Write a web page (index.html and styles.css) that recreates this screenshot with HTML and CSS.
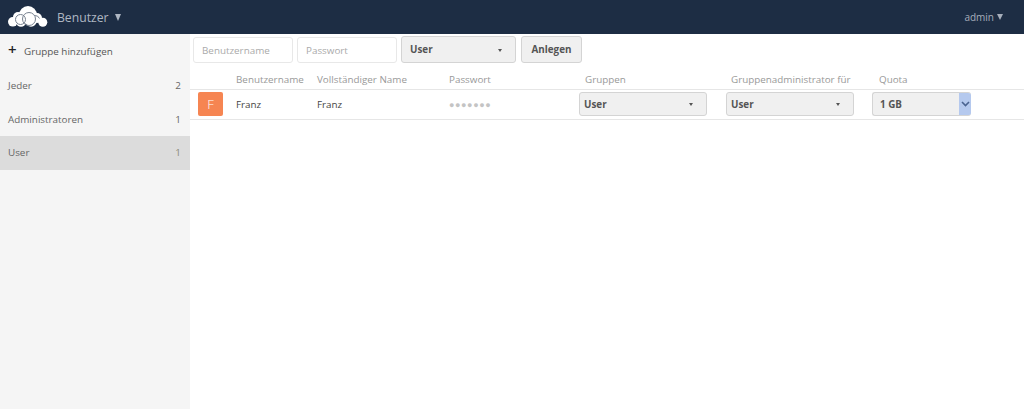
FILE: index.html
```html
<!DOCTYPE html>
<html lang="de">
<head>
<meta charset="utf-8">
<title>Benutzer</title>
<link rel="stylesheet" href="styles.css">
</head>
<body>
<header class="topbar">
  <svg class="logo" width="40" height="21" viewBox="0 0 40 21">
    <g fill="#fff">
      <circle cx="20" cy="9" r="9"/>
      <circle cx="10" cy="11" r="5"/>
      <circle cx="4.800" cy="15.800" r="4.800"/>
      <circle cx="13" cy="16" r="4.800"/>
      <circle cx="23" cy="15" r="5.800"/>
      <circle cx="29" cy="12" r="5"/>
      <circle cx="34.800" cy="16.300" r="4.500"/>
    </g>
    <g fill="none" stroke="#77818f" stroke-width="1">
      <circle cx="21" cy="13" r="6.500"/>
      <circle cx="12.500" cy="13.500" r="5"/>
      <path d="M26.500 9.500a5 5 0 0 1 5 3"/>
    </g>
  </svg>
  <div class="appname">Benutzer <span class="caret-lg"></span></div>
  <div class="usermenu">admin <span class="caret-sm"></span></div>
</header>
<div class="layout">
  <aside class="sidebar">
    <div class="add-group"><span class="plus">+</span>Gruppe hinzufügen</div>
    <ul class="groups">
      <li class="group"><span>Jeder</span><span>2</span></li>
      <li class="group"><span>Administratoren</span><span>1</span></li>
      <li class="group active"><span>User</span><span class="count-soft">1</span></li>
    </ul>
  </aside>
  <main class="content">
    <form class="newuser">
      <div class="field">Benutzername</div>
      <div class="field">Passwort</div>
      <div class="select select-new">User<span class="tri"></span></div>
      <div class="button">Anlegen</div>
    </form>
    <div class="row head">
      <div></div>
      <div>Benutzername</div>
      <div>Vollständiger Name</div>
      <div>Passwort</div>
      <div class="c-groups">Gruppen</div>
      <div class="c-admin">Gruppenadministrator für</div>
      <div class="c-quota">Quota</div>
    </div>
    <div class="row user">
      <div class="avatar">F</div>
      <div>Franz</div>
      <div>Franz</div>
      <div class="dots">●●●●●●●</div>
      <div class="select">User<span class="tri"></span></div>
      <div class="select">User<span class="tri"></span></div>
      <div class="select quota">1 GB
        <span class="spin"><svg width="9" height="6" viewBox="0 0 9 6"><path d="M1 1l3.500 3.500L8 1" fill="none" stroke="#4a6390" stroke-width="1.600"/></svg></span>
      </div>
    </div>
  </main>
</div>
</body>
</html>
```
FILE: styles.css
```css
* { box-sizing: border-box; }
html, body { margin: 0; height: 100%; }
body {
  font-family: "Open Sans", "Liberation Sans", sans-serif;
  font-size: 9.850px;
  color: #555;
  background: #fff;
  overflow: hidden;
}
.topbar {
  height: 34px;
  background: #1d2d44;
  display: flex;
  align-items: center;
  padding: 0 21px 0 8px;
}
.logo { margin-top: -1px; flex: none; }
.appname {
  margin-left: 9px;
  font-size: 12.200px;
  color: #aeb6c2;
  display: flex;
  align-items: center;
  gap: 6px;
}
.caret-lg {
  width: 0; height: 0;
  border-left: 3.500px solid transparent;
  border-right: 3.500px solid transparent;
  border-top: 7px solid #aeb6c2;
}
.usermenu {
  margin-left: auto;
  font-size: 10px;
  color: #a6aebb;
  display: flex;
  align-items: center;
  gap: 3px;
}
.caret-sm {
  width: 0; height: 0;
  border-left: 3px solid transparent;
  border-right: 3px solid transparent;
  border-top: 6px solid #a6aebb;
}
.layout { display: flex; height: 375px; }
.sidebar { width: 190px; background: #f5f5f5; flex: none; }
.add-group {
  height: 35px;
  display: flex;
  align-items: center;
  padding: 0 0 2px 8px;
  color: #555;
}
.plus {
  width: 16px;
  font-size: 15px;
  font-weight: 600;
  color: #222;
  line-height: 1;
  margin-top: -3px;
}
.groups { list-style: none; margin: 0; padding: 0; }
.group {
  height: 33.500px;
  display: flex;
  justify-content: space-between;
  align-items: center;
  padding: 0 9px 1px 8px;
  color: #666;
}
.group.active { background: #dcdcdc; }
.count-soft { color: #8a8a7a; }
.content { flex: 1; padding: 2px 0 0 3px; }
.newuser { display: flex; align-items: flex-start; height: 27px; }
.field {
  width: 100px;
  height: 26px;
  margin: 1px 4px 0 0;
  padding-left: 8px;
  line-height: 25px;
  border: 1px solid #e8e8e8;
  border-radius: 3px;
  color: #aaa;
  background: #fff;
}
.select {
  position: relative;
  height: 24px;
  line-height: 22px;
  padding-left: 4px;
  background: #f0f0f0;
  border: 1px solid #d4d4d4;
  border-radius: 3px;
  font-weight: 700;
  color: #555;
}
.tri {
  position: absolute;
  top: 10px;
  right: 13px;
  width: 0; height: 0;
  border-left: 2px solid transparent;
  border-right: 2px solid transparent;
  border-top: 3px solid #555;
}
.select-new {
  width: 115px;
  height: 27px;
  line-height: 25px;
  padding-left: 8px;
  margin-right: 5px;
}
.select-new .tri { top: 12px; }
.button {
  width: 61px;
  height: 27px;
  line-height: 25px;
  text-align: center;
  background: #f0f0f0;
  border: 1px solid #d4d4d4;
  border-radius: 3px;
  font-weight: 700;
  color: #555;
}
.row {
  display: grid;
  grid-template-columns: 46px 81px 132px 130px 147px 146px 100px;
  margin-left: -3px;
  align-items: center;
}
.row > div:first-child { margin-left: 8px; }
.head {
  height: 27px;
  padding-top: 5px;
  color: #999;
  border-bottom: 1px solid #e6e6e6;
}
.c-groups { padding-left: 6px; }
.c-admin { padding-left: 5px; }
.c-quota { padding-left: 7px; }
.user {
  height: 30px;
  padding-bottom: 1px;
  border-bottom: 1px solid #e6e6e6;
  color: #444;
}
.avatar {
  width: 25px;
  height: 24px;
  background: #f68552;
  border-radius: 2px;
  color: #fff;
  font-size: 13px;
  line-height: 24px;
  text-align: center;
  font-weight: 300;
}
.dots { font-size: 9px; letter-spacing: .6px; color: #c4c4c4; }
.user .select { width: 128px; }
.user .quota {
  width: 99px;
  padding-left: 7px;
  border-right: 0;
  overflow: hidden;
}
.spin {
  position: absolute;
  top: 0; right: 0; bottom: 0;
  width: 12px;
  background: #b5c9ee;
  display: flex;
  align-items: center;
  justify-content: center;
}
```
